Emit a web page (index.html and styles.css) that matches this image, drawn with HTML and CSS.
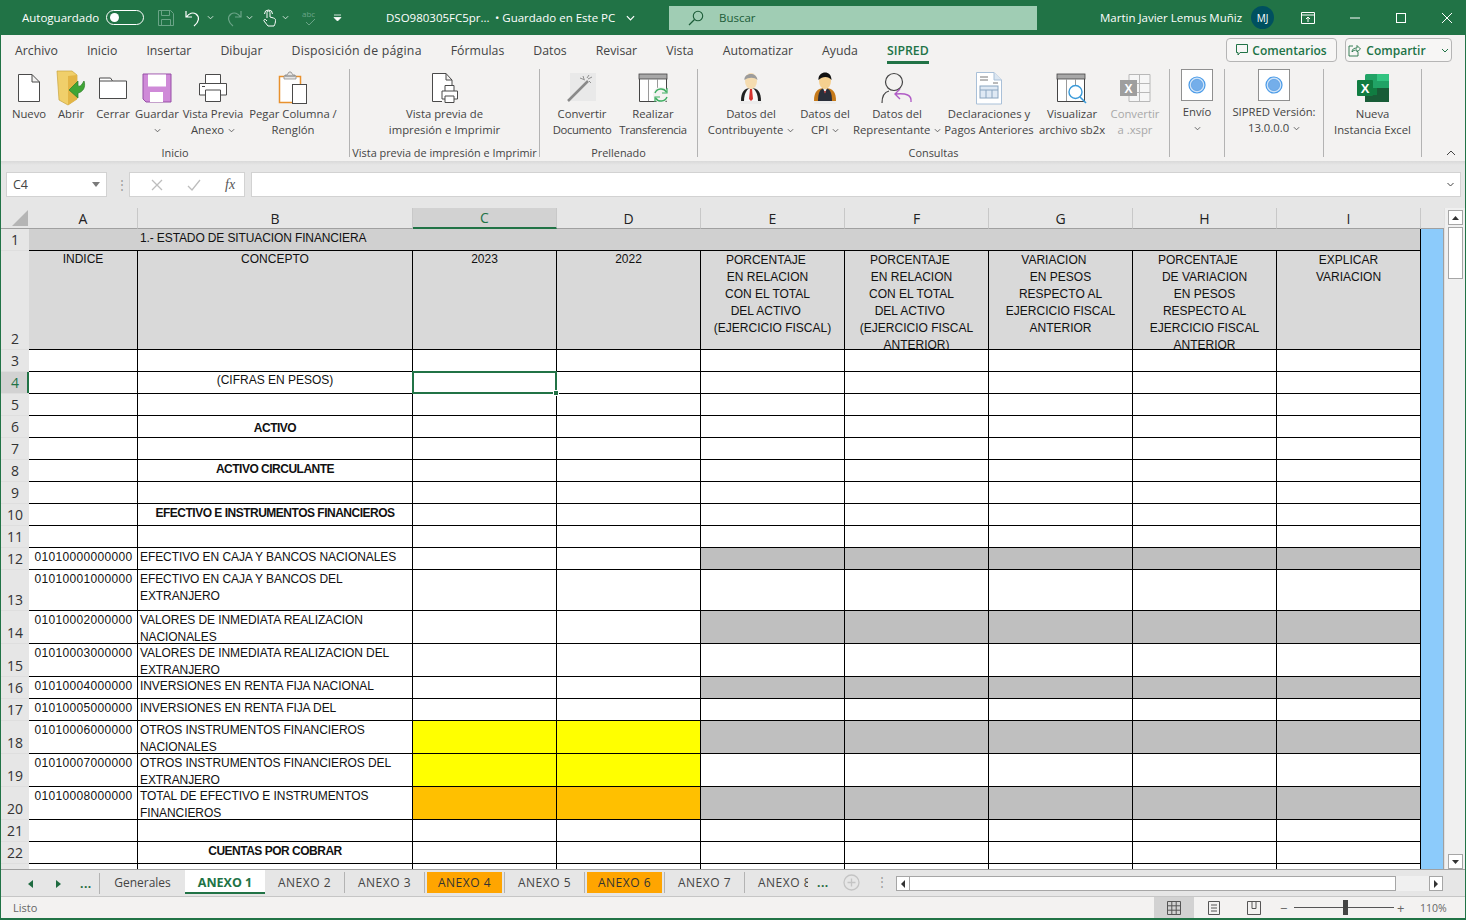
FILE: index.html
```html
<!DOCTYPE html>
<html lang="es">
<head>
<meta charset="utf-8">
<title>Excel</title>
<link rel="stylesheet" href="styles.css">
</head>
<body>
<svg class="defs" width="0" height="0">
  <symbol id="chev" viewBox="0 0 8 5"><path d="M1 1l3 3 3-3" fill="none" stroke="currentColor" stroke-width="1"/></symbol>
  <symbol id="dot" viewBox="0 0 34 34"><rect x=".5" y=".5" width="33" height="33" fill="#fff" stroke="#8a8a8a"/><circle cx="17" cy="17" r="8.500" fill="#cfe3f8" stroke="#4a9be8" stroke-width="1.300"/><circle cx="17" cy="17" r="6" fill="#74aeea" stroke="#5a9fe4" stroke-width=".8"/></symbol>
</svg>
<div class="window">

<header class="titlebar">
  <span class="autosave">Autoguardado</span>
  <span class="toggle"><i></i></span>
  <svg class="ml13 faded" width="18" height="18" viewBox="0 0 18 18"><path d="M1.500 1.500h12l3 3v12h-15zM4.500 1.500v5h8v-5M4.500 16.500v-6h9v6" fill="none" stroke="currentColor"/></svg>
  <svg class="ml10" width="17" height="18" viewBox="0 0 17 18"><path d="M1 2v6h6M1.500 8C4 4 8 3 11 5c4 3 3 8-2 12" fill="none" stroke="currentColor" stroke-width="1.200"/></svg>
  <svg class="ml5 small" width="7" height="5"><use href="#chev"/></svg>
  <svg class="ml11 faded" width="17" height="18" viewBox="0 0 17 18"><path d="M16 2v6h-6M15.500 8C13 4 9 3 6 5c-4 3-3 8 2 12" fill="none" stroke="currentColor" stroke-width="1.200"/></svg>
  <svg class="ml4 small faded" width="7" height="5"><use href="#chev"/></svg>
  <svg class="ml9" width="14" height="18" viewBox="0 0 14 18"><path d="M5 9V3.500a1.500 1.500 0 0 1 3 0V8l3.500 1c1.500.5 2 1 2 2.500 0 2-.5 3.500-1.500 5.500H6L2 12c-.5-1 .5-2 1.500-1.500L5 12M2.500 5a4 4 0 0 1 8 0" fill="none" stroke="currentColor" stroke-width="1"/></svg>
  <svg class="ml6 small" width="7" height="5"><use href="#chev"/></svg>
  <svg class="ml12 faded" width="18" height="18" viewBox="0 0 18 18"><text x="1" y="8" class="abc">abc</text><path d="M5 13l3 3 6-6" fill="none" stroke="currentColor"/></svg>
  <svg class="ml14" width="9" height="8" viewBox="0 0 9 8"><path d="M1 1h7M1 3.500l3.500 3.500L8 3.500z" fill="currentColor" stroke="currentColor" stroke-width=".8"/></svg>
  <span class="doc-name">DSO980305FC5pr...</span>
  <span class="doc-state">• Guardado en Este PC</span>
  <svg class="ml5" width="11" height="6" viewBox="0 0 8 5"><use href="#chev"/></svg>
  <div class="search">
    <svg width="16" height="16" viewBox="0 0 16 16"><circle cx="10" cy="6" r="4.700" fill="none" stroke="#1c5c38" stroke-width="1.100"/><path d="M6.500 9.500L1 15" stroke="#1c5c38" stroke-width="1.200"/></svg>
    <span>Buscar</span>
  </div>
  <span class="user">Martin Javier Lemus Muñiz</span>
  <span class="avatar">MJ</span>
  <svg class="ml27" width="14" height="12" viewBox="0 0 14 12"><path d="M.5 .5h13v11H.5zM.5 3h13M7 10V5M5 7l2-2 2 2" fill="none" stroke="currentColor"/></svg>
  <svg class="ml35" width="10" height="2" viewBox="0 0 10 2"><path d="M0 1h10" stroke="currentColor"/></svg>
  <svg class="ml36" width="10" height="10" viewBox="0 0 10 10"><rect x=".5" y=".5" width="9" height="9" fill="none" stroke="currentColor"/></svg>
  <svg class="ml36" width="10" height="10" viewBox="0 0 10 10"><path d="M0 0l10 10M10 0L0 10" stroke="currentColor"/></svg>
</header>

<nav class="tabsrow">
  <span>Archivo</span><span>Inicio</span><span>Insertar</span><span>Dibujar</span><span class="wide">Disposición de página</span><span>Fórmulas</span><span>Datos</span><span>Revisar</span><span>Vista</span><span>Automatizar</span><span>Ayuda</span><span class="active">SIPRED</span>
  <div class="share">
    <button class="sbtn comment"><svg width="12" height="12" viewBox="0 0 12 12"><path d="M.5 .5h11v8H4L2 11V8.500H.5z" fill="none" stroke="#217346"/></svg>Comentarios</button>
    <button class="sbtn compart"><svg width="13" height="13" viewBox="0 0 13 13"><path d="M5 2H1v10h9V8M4 8c0-3 2-4 5-4V1.500L12.500 5 9 8V6C7 6 5 6.500 4 8z" fill="none" stroke="#217346" stroke-width=".9"/></svg>Compartir<svg class="ml10" width="8" height="5"><use href="#chev"/></svg></button>
  </div>
</nav>

<section class="ribbon">
  <div class="group">
    <div class="items p7">
      <div class="item w42">
        <div class="ic"><svg width="24" height="30" viewBox="0 0 24 30"><path d="M1.500 1.500H15L22.500 9v19.500h-21zM15 1.500V9h7.500" fill="#fff" stroke="#4a4a4a"/></svg></div>
        <div class="lb">Nuevo</div>
      </div>
      <div class="item w42">
        <div class="ic"><svg width="30" height="36" viewBox="0 0 30 36"><path d="M1 1l15 0 5 4v24l-9 6-9-5z" fill="#f0cf6a" stroke="#c9a33c" stroke-width=".7"/><path d="M12 6l9-1v24l-9 6z" fill="#e3b545"/><path d="M28 11c2 6-1 11-6 12v5l-9-8 9-9v5c3 1 4-2 6-5z" fill="#3fa535" stroke="#2a7d25" stroke-width=".7"/></svg></div>
        <div class="lb">Abrir</div>
      </div>
      <div class="item w42">
        <div class="ic"><svg width="30" height="24" viewBox="0 0 30 24"><path d="M1.500 22.500V2h11l2 3h14v17.500zM1.500 5h13" fill="#fff" stroke="#4a4a4a"/></svg></div>
        <div class="lb">Cerrar</div>
      </div>
      <div class="item w46">
        <div class="ic"><svg width="30" height="30" viewBox="0 0 30 30"><path d="M1 1h28v28H4l-3-3z" fill="#cf8ad8" stroke="#964fa6"/><rect x="6" y="1.500" width="18" height="12" fill="#fff"/><rect x="8" y="19" width="13" height="10" fill="#fff"/></svg></div>
        <div class="lb">Guardar<br><svg class="chev" width="7" height="5"><use href="#chev"/></svg></div>
      </div>
      <div class="item w66">
        <div class="ic"><svg width="30" height="30" viewBox="0 0 30 30"><path d="M7.500 10V1.500h15V10M7.500 22h-6V10.500h27V22h-6M7.500 17h15v11.500h-15z" fill="#fff" stroke="#4a4a4a"/><path d="M4 13.500h3" stroke="#4a4a4a"/></svg></div>
        <div class="lb">Vista Previa<br>Anexo <svg class="chev" width="7" height="5"><use href="#chev"/></svg></div>
      </div>
      <div class="item w94">
        <div class="ic"><svg width="30" height="34" viewBox="0 0 30 34"><path d="M1.500 5.500h21v26h-21z" fill="#fff" stroke="#e8912d" stroke-width="1.500"/><path d="M7 5h10v-1h-2l-2-3h-2l-2 3H7zM6 5h12v3H6z" fill="#e4e4e4" stroke="#8a8a8a" stroke-width=".8"/><rect x="14.500" y="13.500" width="14" height="19" fill="#fff" stroke="#4a4a4a"/></svg></div>
        <div class="lb">Pegar Columna /<br>Renglón</div>
      </div>
    </div>
    <div class="glabel">Inicio</div>
  </div>

  <div class="group g-vista">
    <div class="items center">
      <div class="item w130">
        <div class="ic"><svg width="28" height="32" viewBox="0 0 28 32"><path d="M11 29.500H1.500v-28H15L21 8v7M15 1.500V8h6" fill="#fff" stroke="#4a4a4a"/><path d="M14 19v-5.500h9V19M14 27h-3v-8h15.500v8H23M14 24h9v6.500h-9z" fill="#fff" stroke="#4a4a4a"/></svg></div>
        <div class="lb">Vista previa de<br>impresión e Imprimir</div>
      </div>
    </div>
    <div class="glabel">Vista previa de impresión e Imprimir</div>
  </div>

  <div class="group g-prell">
    <div class="items p8">
      <div class="item w68">
        <div class="ic"><svg width="32" height="32" viewBox="0 0 32 32"><rect x="4" y="1" width="26" height="28" fill="#e9e9e9"/><path d="M2 29L22 9" stroke="#8a8a8a" stroke-width="2.500"/><path d="M17 4l1 3M23 3l-2 3M26 5l-4 2M14 6l5 2M25 11l-2-2" stroke="#777" stroke-width=".8"/></svg></div>
        <div class="lb">Convertir<br><span class="cond">Documento</span></div>
      </div>
      <div class="item w70 ml2">
        <div class="ic"><svg width="34" height="32" viewBox="0 0 34 32"><path d="M3.500 2.500h27v27h-27z" fill="#fff" stroke="#444"/><rect x="3" y="2" width="28" height="5" fill="#a8a8a8" stroke="#444" stroke-width=".8"/><path d="M12.500 7v22M21.500 7v22" stroke="#9a9a9a"/><circle cx="25" cy="23" r="8" fill="#f3f2f1"/><path d="M19 21a6.500 6.500 0 0 1 11.500-1M31 25a6.500 6.500 0 0 1-11.500 1" fill="none" stroke="#3fae62" stroke-width="1.500"/><path d="M31 16v5h-5M19 30v-5h5" fill="none" stroke="#3fae62" stroke-width="1.200"/></svg></div>
        <div class="lb">Realizar<br><span class="cond">Transferencia</span></div>
      </div>
    </div>
    <div class="glabel">Prellenado</div>
  </div>

  <div class="group g-cons">
    <div class="items p7">
      <div class="item w92">
        <div class="ic"><svg width="26" height="34" viewBox="0 0 26 34"><path d="M3 30c0-9 3-13 10-13s10 4 10 13z" fill="#222"/><path d="M6 30c0-7 3-13 7-13s7 6 7 13z" fill="#f7f7f7"/><path d="M12 18h2l1 10-2 2-2-2z" fill="#d5322e"/><ellipse cx="13" cy="10" rx="6" ry="8" fill="#f5dcb0"/><path d="M6.500 9c-1-7 12-9 13 0-3-3-9-3-13 0z" fill="#9c9c9c"/><rect x="2" y="30" width="22" height="3" rx="1.500" fill="#ececec"/></svg></div>
        <div class="lb">Datos del<br>Contribuyente <svg class="chev" width="7" height="5"><use href="#chev"/></svg></div>
      </div>
      <div class="item w56">
        <div class="ic"><svg width="26" height="34" viewBox="0 0 26 34"><path d="M2 30c0-9 3-13 11-13s11 4 11 13z" fill="#c67a1a"/><path d="M6 30c0-8 2-13 7-13s7 5 7 13z" fill="#2a2f3a"/><path d="M11 17h4l-2 5z" fill="#f0f0f0"/><path d="M12 20h2l-1 3z" fill="#c03030"/><ellipse cx="13" cy="10" rx="6" ry="8" fill="#f5d08f"/><path d="M6.500 9c-1-9 13-11 13 0-3-4-9-4-13 0z" fill="#111"/><rect x="2" y="30" width="22" height="3" rx="1.500" fill="#ececec"/></svg></div>
        <div class="lb">Datos del<br>CPI <svg class="chev" width="7" height="5"><use href="#chev"/></svg></div>
      </div>
      <div class="item w88">
        <div class="ic"><svg width="32" height="34" viewBox="0 0 32 34"><circle cx="13" cy="11" r="8.500" fill="none" stroke="#444" stroke-width="1.200"/><path d="M1 32c0-7 3-11 7-12" fill="none" stroke="#444" stroke-width="1.200"/><path d="M30 31c1-7-5-9-15-8M19 18l-5 5 5 5" fill="none" stroke="#b05cc6" stroke-width="1.400"/></svg></div>
        <div class="lb">Datos del<br>Representante <svg class="chev" width="7" height="5"><use href="#chev"/></svg></div>
      </div>
      <div class="item w92 ml2">
        <div class="ic"><svg width="28" height="34" viewBox="0 0 28 34"><path d="M1.500 1.500H19L26.500 9v24h-25z" fill="#fff" stroke="#a9c0d8"/><path d="M19 1.500V9h7.500" fill="#dbe6f1" stroke="#a9c0d8"/><path d="M5 6h8M5 9h8M18 12h5" stroke="#777"/><rect x="5" y="15" width="18" height="12" fill="#dfe9f4" stroke="#8aa5c0"/><path d="M5 19h18M11 19v8M17 19v8" stroke="#8aa5c0"/></svg></div>
        <div class="lb">Declaraciones y<br>Pagos Anteriores</div>
      </div>
      <div class="item w70 ml2">
        <div class="ic"><svg width="32" height="32" viewBox="0 0 32 32"><path d="M1.500 2.500h27v27h-27z" fill="#fff" stroke="#444"/><rect x="1" y="2" width="28" height="5" fill="#a8a8a8" stroke="#444" stroke-width=".8"/><path d="M10.500 7v22M19.500 7v12" stroke="#9a9a9a"/><circle cx="19.500" cy="20" r="6.500" fill="#fff" stroke="#3a9ad9" stroke-width="1.400"/><path d="M24 25l6 6" stroke="#3a9ad9" stroke-width="1.600"/></svg></div>
        <div class="lb">Visualizar<br>archivo sb2x</div>
      </div>
      <div class="item w56 off">
        <div class="ic"><svg width="32" height="30" viewBox="0 0 32 30"><path d="M10 1.500h21v27H10zM10 10.500h21M10 19.500h21M20.500 1.500v27" fill="#f6f6f6" stroke="#b8b8b8"/><rect x="1" y="7" width="17" height="16" fill="#9e9e9e"/><text x="9.500" y="20" class="xmark">X</text></svg></div>
        <div class="lb">Convertir<br>a .xspr</div>
      </div>
    </div>
    <div class="glabel">Consultas</div>
  </div>

  <div class="group g-envio">
    <div class="items center">
      <div class="item w54 high">
        <div class="ic"><svg width="32" height="32"><use href="#dot"/></svg></div>
        <div class="lb">Envío<br><svg class="chev" width="7" height="5"><use href="#chev"/></svg></div>
      </div>
    </div>
  </div>
  <div class="group g-sipred">
    <div class="items center">
      <div class="item w98 high">
        <div class="ic"><svg width="32" height="32"><use href="#dot"/></svg></div>
        <div class="lb">SIPRED Versión:<br>13.0.0.0 <svg class="chev" width="7" height="5"><use href="#chev"/></svg></div>
      </div>
    </div>
  </div>
  <div class="group g-nueva">
    <div class="items center">
      <div class="item w98">
        <div class="ic"><svg width="34" height="30" viewBox="0 0 34 30"><rect x="9" y="1" width="24" height="28" rx="1.500" fill="#21a366"/><rect x="21" y="1" width="12" height="7" fill="#33c481"/><rect x="9" y="15" width="24" height="14" fill="#107c41"/><rect x="21" y="15" width="12" height="7" fill="#185c37"/><rect x="9" y="22" width="24" height="7" fill="#185c37"/><rect x="1" y="7" width="16" height="16" rx="1" fill="#107c41"/><text x="9" y="20" class="xlogo">X</text></svg></div>
        <div class="lb">Nueva<br>Instancia Excel</div>
      </div>
    </div>
  </div>
  <svg class="collapse" width="10" height="6" viewBox="0 0 10 6"><path d="M1 5l4-4 4 4" fill="none" stroke="#444"/></svg>
</section>

<section class="formulabar">
  <div class="namebox"><span>C4</span><svg width="8" height="5" viewBox="0 0 8 5"><path d="M0 0h8L4 5z" fill="#7a7a7a"/></svg></div>
  <div class="fdots">⋮</div>
  <div class="fxbox">
    <svg width="12" height="12" viewBox="0 0 12 12"><path d="M1 1l10 10M11 1L1 11" stroke="#bdbdbd" stroke-width="1.300"/></svg>
    <svg width="14" height="12" viewBox="0 0 14 12"><path d="M1 7l4 4 8-10" fill="none" stroke="#bdbdbd" stroke-width="1.300"/></svg>
    <i>fx</i>
  </div>
  <div class="finput"><svg width="9" height="5" viewBox="0 0 8 5"><use href="#chev"/></svg></div>
</section>

<main class="sheet">
  <div class="gridwrap">
  <table class="grid">
    <colgroup><col class="c-h"><col class="c-a"><col class="c-b"><col class="c-d"><col class="c-d"><col class="c-d"><col class="c-d"><col class="c-d"><col class="c-d"><col class="c-d"><col class="c-j"></colgroup>
    <thead>
      <tr class="hdr">
        <th class="corner"><svg width="16" height="16" viewBox="0 0 16 16"><path d="M16 0v16H0z" fill="#b5b5b5"/></svg></th>
        <th>A</th><th>B</th><th class="cur">C</th><th>D</th><th>E</th><th>F</th><th>G</th><th>H</th><th>I</th><th class="nohdr"></th>
      </tr>
    </thead>
    <tbody>
      <tr class="h22"><th>1</th><td colspan="9" class="title"><div class="c">1.- ESTADO DE SITUACION FINANCIERA</div></td><td rowspan="23" class="blue"></td></tr>
      <tr class="h99 head">
        <th>2</th>
        <td><div class="c mid tight">INDICE</div></td>
        <td><div class="c mid tight">CONCEPTO</div></td>
        <td><div class="c mid tight">2023</div></td>
        <td><div class="c mid tight">2022</div></td>
        <td><div class="c mid">PORCENTAJE&nbsp;&nbsp;&nbsp;&nbsp;<br>EN RELACION&nbsp;&nbsp;&nbsp;<br>CON EL TOTAL&nbsp;&nbsp;&nbsp;<br>DEL ACTIVO&nbsp;&nbsp;&nbsp;&nbsp;<br>(EJERCICIO FISCAL)</div></td>
        <td><div class="c mid">PORCENTAJE&nbsp;&nbsp;&nbsp;&nbsp;<br>EN RELACION&nbsp;&nbsp;&nbsp;<br>CON EL TOTAL&nbsp;&nbsp;&nbsp;<br>DEL ACTIVO&nbsp;&nbsp;&nbsp;&nbsp;<br>(EJERCICIO FISCAL<br>ANTERIOR)</div></td>
        <td><div class="c mid">VARIACION&nbsp;&nbsp;&nbsp;&nbsp;<br>EN PESOS<br>RESPECTO AL<br>EJERCICIO FISCAL<br>ANTERIOR</div></td>
        <td><div class="c mid">PORCENTAJE&nbsp;&nbsp;&nbsp;&nbsp;<br>DE VARIACION<br>EN PESOS<br>RESPECTO AL<br>EJERCICIO FISCAL<br>ANTERIOR</div></td>
        <td><div class="c mid">EXPLICAR<br>VARIACION</div></td>
      </tr>
      <tr class="h22"><th>3</th><td></td><td></td><td></td><td></td><td></td><td></td><td></td><td></td><td></td></tr>
      <tr class="h22 r4"><th>4</th><td></td><td><div class="c mid nopad">(CIFRAS EN PESOS)</div></td><td class="sel"><div class="cursor"><i></i></div></td><td></td><td></td><td></td><td></td><td></td><td></td></tr>
      <tr class="h22"><th>5</th><td></td><td></td><td></td><td></td><td></td><td></td><td></td><td></td><td></td></tr>
      <tr class="h22"><th>6</th><td></td><td><div class="c mid b low">ACTIVO</div></td><td></td><td></td><td></td><td></td><td></td><td></td><td></td></tr>
      <tr class="h22"><th>7</th><td></td><td></td><td></td><td></td><td></td><td></td><td></td><td></td><td></td></tr>
      <tr class="h22"><th>8</th><td></td><td><div class="c mid b">ACTIVO CIRCULANTE</div></td><td></td><td></td><td></td><td></td><td></td><td></td><td></td></tr>
      <tr class="h22"><th>9</th><td></td><td></td><td></td><td></td><td></td><td></td><td></td><td></td><td></td></tr>
      <tr class="h22"><th>10</th><td></td><td><div class="c mid b">EFECTIVO E INSTRUMENTOS FINANCIEROS</div></td><td></td><td></td><td></td><td></td><td></td><td></td><td></td></tr>
      <tr class="h22"><th>11</th><td></td><td></td><td></td><td></td><td></td><td></td><td></td><td></td><td></td></tr>
      <tr class="h22"><th>12</th><td><div class="c idx">01010000000000</div></td><td><div class="c tx">EFECTIVO EN CAJA Y BANCOS NACIONALES</div></td><td></td><td></td><td class="g"></td><td class="g"></td><td class="g"></td><td class="g"></td><td class="g"></td></tr>
      <tr class="h41"><th>13</th><td><div class="c idx">01010001000000</div></td><td><div class="c tx">EFECTIVO EN CAJA Y BANCOS DEL EXTRANJERO</div></td><td></td><td></td><td></td><td></td><td></td><td></td><td></td></tr>
      <tr class="h33"><th>14</th><td><div class="c idx">01010002000000</div></td><td><div class="c tx">VALORES DE INMEDIATA REALIZACION NACIONALES</div></td><td></td><td></td><td class="g"></td><td class="g"></td><td class="g"></td><td class="g"></td><td class="g"></td></tr>
      <tr class="h33"><th>15</th><td><div class="c idx">01010003000000</div></td><td><div class="c tx">VALORES DE INMEDIATA REALIZACION DEL EXTRANJERO</div></td><td></td><td></td><td></td><td></td><td></td><td></td><td></td></tr>
      <tr class="h22"><th>16</th><td><div class="c idx">01010004000000</div></td><td><div class="c tx">INVERSIONES EN RENTA FIJA NACIONAL</div></td><td></td><td></td><td class="g"></td><td class="g"></td><td class="g"></td><td class="g"></td><td class="g"></td></tr>
      <tr class="h22"><th>17</th><td><div class="c idx">01010005000000</div></td><td><div class="c tx">INVERSIONES EN RENTA FIJA DEL</div></td><td></td><td></td><td></td><td></td><td></td><td></td><td></td></tr>
      <tr class="h33"><th>18</th><td><div class="c idx">01010006000000</div></td><td><div class="c tx">OTROS INSTRUMENTOS FINANCIEROS NACIONALES</div></td><td class="y"></td><td class="y"></td><td class="g"></td><td class="g"></td><td class="g"></td><td class="g"></td><td class="g"></td></tr>
      <tr class="h33"><th>19</th><td><div class="c idx">01010007000000</div></td><td><div class="c tx">OTROS INSTRUMENTOS FINANCIEROS DEL EXTRANJERO</div></td><td class="y"></td><td class="y"></td><td></td><td></td><td></td><td></td><td></td></tr>
      <tr class="h33"><th>20</th><td><div class="c idx">01010008000000</div></td><td><div class="c tx">TOTAL DE EFECTIVO E INSTRUMENTOS FINANCIEROS</div></td><td class="o"></td><td class="o"></td><td class="g"></td><td class="g"></td><td class="g"></td><td class="g"></td><td class="g"></td></tr>
      <tr class="h22"><th>21</th><td></td><td></td><td></td><td></td><td></td><td></td><td></td><td></td><td></td></tr>
      <tr class="h22"><th>22</th><td></td><td><div class="c mid b">CUENTAS POR COBRAR</div></td><td></td><td></td><td></td><td></td><td></td><td></td><td></td></tr>
      <tr class="h22"><th>23</th><td></td><td></td><td></td><td></td><td></td><td></td><td></td><td></td><td></td></tr>
    </tbody>
  </table>
  </div>
  <aside class="vscroll">
    <div class="vbtn"><svg width="7" height="4" viewBox="0 0 7 4"><path d="M0 4l3.500-4L7 4z" fill="#333"/></svg></div>
    <div class="vthumb"></div>
    <div class="vbtn bottom"><svg width="7" height="4" viewBox="0 0 7 4"><path d="M0 0l3.500 4L7 0z" fill="#333"/></svg></div>
  </aside>
</main>

<section class="sheetbar">
  <div class="nav">
    <svg width="5" height="8" viewBox="0 0 5 8"><path d="M5 0v8L0 4z" fill="#1e6b40"/></svg>
    <svg class="nav2" width="5" height="8" viewBox="0 0 5 8"><path d="M0 0v8l5-4z" fill="#1e6b40"/></svg>
    <b>...</b>
  </div>
  <div class="tab first"><span>Generales</span></div>
  <div class="tab cur"><span>ANEXO 1</span></div>
  <div class="tab"><span>ANEXO 2</span></div>
  <div class="tab"><span>ANEXO 3</span></div>
  <div class="tab orange"><span>ANEXO 4</span></div>
  <div class="tab"><span>ANEXO 5</span></div>
  <div class="tab orange"><span>ANEXO 6</span></div>
  <div class="tab"><span>ANEXO 7</span></div>
  <div class="tab last"><span>ANEXO 8</span></div>
  <b class="more">...</b>
  <svg class="plus" width="17" height="17" viewBox="0 0 17 17"><circle cx="8.500" cy="8.500" r="7.500" fill="none" stroke="#c4c4c4" stroke-width="1.300"/><path d="M8.500 4.500v8M4.500 8.500h8" stroke="#c4c4c4" stroke-width="1.300"/></svg>
  <span class="vdots">⋮</span>
  <div class="hscroll">
    <div class="harrow"><svg width="4" height="8" viewBox="0 0 4 8"><path d="M4 0v8L0 4z" fill="#333"/></svg></div>
    <div class="hthumb"></div>
    <div class="harrow end"><svg width="4" height="8" viewBox="0 0 4 8"><path d="M0 0v8l4-4z" fill="#333"/></svg></div>
  </div>
</section>

<footer class="status">
  <span class="ready">Listo</span>
  <div class="view on"><svg width="14" height="14" viewBox="0 0 14 14"><path d="M.5 .5h13v13H.5zM.5 4.800h13M.5 9.200h13M4.800 .5v13M9.200 .5v13" fill="none" stroke="#555"/></svg></div>
  <div class="view"><svg width="14" height="14" viewBox="0 0 14 14"><path d="M1.500 .5h11v13h-11zM4 4h6M4 7h6M4 10h6" fill="none" stroke="#555"/></svg></div>
  <div class="view"><svg width="14" height="14" viewBox="0 0 14 14"><path d="M.5 .5h13v13H.5zM5 .5v7h4v-7" fill="none" stroke="#555"/></svg></div>
  <span class="zminus">−</span>
  <div class="slider"><i></i></div>
  <span class="zplus">+</span>
  <span class="zoom">110%</span>
</footer>

</div>
</body>
</html>
```
FILE: styles.css
```css
* { box-sizing: border-box; }
html, body { margin: 0; padding: 0; height: 920px; overflow: hidden; }
body { font-family: "Open Sans", "Liberation Sans", sans-serif; font-size: 11.5px; color: #444; background: #f3f2f1; }
.defs { position: absolute; }
.window { width: 1466px; height: 920px; border-left: 1px solid #217346; border-right: 1px solid #217346; border-bottom: 2px solid #217346; display: flex; flex-direction: column; overflow: hidden; }

/* title bar */
.titlebar { flex: none; height: 35px; background: #217346; color: #fff; display: flex; align-items: center; padding-left: 21px; }
.titlebar svg { flex: none; }
.autosave { width: 84px; }
.toggle { width: 38px; height: 15px; border: 1px solid #fff; border-radius: 8px; display: flex; align-items: center; padding-left: 3px; }
.toggle i { width: 9px; height: 9px; background: #fff; border-radius: 50%; }
.faded { color: #6aa487; }
.small { color: #e4efe9; }
.ml2 { margin-left: 2px; } .ml4 { margin-left: 4px; } .ml5 { margin-left: 5px; } .ml6 { margin-left: 6px; } .ml9 { margin-left: 9px; } .ml10 { margin-left: 10px; } .ml11 { margin-left: 11px; } .ml12 { margin-left: 12px; } .ml13 { margin-left: 13px; } .ml14 { margin-left: 14px; } .ml27 { margin-left: 27px; } .ml35 { margin-left: 35px; } .ml36 { margin-left: 36px; }
.abc { font-size: 8px; fill: #6aa487; font-family: "Open Sans", sans-serif; }
.doc-name { margin-left: 44px; width: 109px; white-space: nowrap; }
.doc-state { white-space: nowrap; width: 125px; }
.search { margin-left: 33px; width: 368px; height: 24px; background: #a0cdb4; color: #1c5c38; display: flex; align-items: center; padding-left: 19px; flex: none; }
.search span { margin-left: 15px; }
.user { margin-left: 63px; width: 151px; white-space: nowrap; }
.avatar { width: 23px; height: 23px; border-radius: 50%; background: #00505f; font-size: 10px; display: flex; align-items: center; justify-content: center; }

/* ribbon tabs */
.tabsrow { flex: none; height: 30px; display: flex; align-items: center; gap: 29px; padding-left: 14px; background: #f3f2f1; font-size: 12.3px; position: relative; }
.tabsrow > span { white-space: nowrap; }
.tabsrow .wide { letter-spacing: .25px; }
.tabsrow .active { font-weight: 600; color: #217346; box-shadow: inset 0 -3px 0 #217346; height: 28px; display: flex; align-items: center; }
.share { margin-left: auto; display: flex; gap: 8px; margin-right: 13px; }
.sbtn { font: 600 12px "Open Sans", sans-serif; color: #217346; height: 24px; background: #f7f6f5; border: 1px solid #b5b5b5; border-radius: 4px; display: flex; align-items: center; justify-content: center; gap: 4px; padding: 0; }
.comment { width: 111px; }
.compart { width: 107px; gap: 5px; }

/* ribbon */
.ribbon { flex: none; height: 96px; padding-top: 4px; display: flex; background: #f3f2f1; }
.group { width: 349px; height: 88px; border-right: 1px solid #b3b3b3; display: flex; flex-direction: column; flex: none; }
.items { flex: 1; display: flex; }
.items.center { justify-content: center; }
.p7 { padding-left: 7px; }
.p8 { padding-left: 8px; }
.glabel { height: 16px; margin-bottom: -4px; line-height: 16px; text-align: center; font-size: 10.9px; white-space: nowrap; }
.g-vista { width: 190px; }
.g-prell { width: 158px; }
.g-cons { width: 472px; }
.g-envio { width: 55px; }
.g-sipred { width: 99px; }
.g-nueva { width: 98px; }
.item { flex: none; text-align: center; }
.w42 { width: 42px; } .w46 { width: 46px; } .w54 { width: 54px; } .w56 { width: 56px; } .w66 { width: 66px; } .w68 { width: 68px; } .w70 { width: 70px; } .w88 { width: 88px; } .w92 { width: 92px; } .w94 { width: 94px; } .w98 { width: 98px; } .w130 { width: 130px; }
.ic { height: 37px; display: flex; align-items: center; justify-content: center; }
.lb { line-height: 16px; white-space: nowrap; font-size: 11.3px; }
.lb .chev { margin-left: 1px; vertical-align: 1px; color: #555; }
.cond { letter-spacing: -.35px; }
.off { color: #a8a8a8; }
.high .ic { height: 33px; align-items: flex-start; }
.high .lb { margin-top: 2px; }
.xmark { font: bold 12px "Liberation Sans", sans-serif; fill: #fff; text-anchor: middle; }
.xlogo { font: bold 13px "Liberation Sans", sans-serif; fill: #fff; text-anchor: middle; }
.collapse { align-self: flex-end; margin: 0 0 5px 24px; }

/* formula bar */
.formulabar { flex: none; height: 47px; background: linear-gradient(#d9d9d9, #e6e6e6 4px); display: flex; align-items: flex-start; padding: 11px 0 0 5px; }
.namebox { width: 101px; height: 25px; background: #fff; border: 1px solid #d2d2d2; display: flex; align-items: center; justify-content: space-between; padding: 0 6px 0 6px; font-size: 12.500px; }
.fdots { width: 22px; padding-left: 8px; text-align: center; line-height: 25px; color: #9a9a9a; }
.fxbox { width: 116px; height: 25px; background: #fff; border: 1px solid #d2d2d2; display: flex; align-items: center; padding-left: 21px; gap: 24px; }
.fxbox i { font: italic 14px "Liberation Serif", serif; color: #555; }
.finput { width: 1210px; height: 25px; margin-left: 6px; background: #fff; border: 1px solid #d2d2d2; display: flex; align-items: center; justify-content: flex-end; padding-right: 5px; color: #444; }

/* sheet */
.sheet { flex: none; height: 661px; display: flex; background: #e6e6e6; }
.gridwrap { width: 1443px; height: 661px; overflow: hidden; flex: none; }
.grid { border-collapse: separate; border-spacing: 0; table-layout: fixed; width: 1443px; font: 12px/17px "Liberation Sans", Arial, sans-serif; color: #111; background: #fff; }
.c-h { width: 28px; } .c-a { width: 109px; } .c-b { width: 275px; } .c-d { width: 144px; } .c-j { width: 23px; }
.grid td { padding: 0; border-right: 1px solid #000; border-bottom: 1px solid #000; vertical-align: top; }
.grid tbody th { padding: 0; background: #e6e6e6; font: 400 14px/21px "Open Sans", sans-serif; color: #333; vertical-align: bottom; text-align: center; border-bottom: 1px solid #dedede; }
.hdr { height: 20px; }
.hdr th { padding: 0; background: #e6e6e6; font: 400 14px/19px "Open Sans", sans-serif; color: #222; border-right: 1px solid #c8c8c8; border-bottom: 1px solid #a0a0a0; text-align: center; vertical-align: middle; }
.hdr .corner { text-align: right; padding-right: 1px; line-height: 0; border-right: 0; }
.hdr .cur { background: #d2d2d2; color: #217346; border-bottom: 2px solid #217346; }
.hdr .nohdr { border-right: 0; }
.h22 { height: 22px; } .h33 { height: 33px; } .h41 { height: 41px; } .h99 { height: 99px; }
.c { overflow: hidden; height: 21px; padding-top: 1px; }
.h33 .c { height: 32px; } .h41 .c { height: 40px; } .h99 .c { height: 98px; }
.mid { text-align: center; }
.tight { line-height: 15px; }
.b { font-weight: bold; letter-spacing: -.5px; }
.low { padding-top: 4px; }
.nopad { padding-top: 0; }
.tx { padding-left: 2px; letter-spacing: -.08px; }
.idx { text-align: center; letter-spacing: .33px; padding-left: 1px; }
.grid .title { background: #d0d0d0; padding-left: 111px; letter-spacing: -.12px; }
.title .c { padding-top: 1px; }
.head td { background: #d9d9d9; }
.grid .g { background: #bfbfbf; }
.grid .y { background: #ff0; }
.grid .o { background: #ffc000; }
.grid .blue { background: #8ccbfb; border-right: 1px solid #a0a0a0; border-bottom: 0; }
.grid .r4 th { background: #d2d2d2; color: #217346; box-shadow: inset -2px 0 0 #217346; }
.sel { position: relative; }
.cursor { position: absolute; left: -1px; top: -1px; right: -1px; bottom: -1px; border: 2px solid #217346; }
.cursor i { position: absolute; right: -4px; bottom: -4px; width: 6px; height: 6px; background: #217346; border: 1px solid #fff; }

/* vertical scrollbar */
.vscroll { flex: none; width: 21px; background: #f0f0f0; display: flex; flex-direction: column; align-items: center; padding-top: 2px; border-left: 1px solid #e0e0e0; }
.vbtn { width: 15px; height: 15px; background: #fff; border: 1px solid #a6a6a6; display: flex; align-items: center; justify-content: center; flex: none; }
.vbtn.bottom { margin-top: auto; }
.vthumb { width: 15px; height: 52px; margin-top: 2px; background: #fff; border: 1px solid #a6a6a6; }

/* sheet tabs */
.sheetbar { flex: none; height: 28px; background: #e6e6e6; border-top: 1px solid #a0a0a0; border-bottom: 1px solid #c6c6c6; display: flex; align-items: flex-start; font-size: 12px; }
.nav { width: 99px; height: 21px; margin-top: 3px; border-right: 1px solid #b3b3b3; display: flex; align-items: center; padding-left: 27px; color: #1e6b40; flex: none; }
.nav2 { margin-left: 23px; }
.nav b { margin-left: 19px; font-size: 12px; letter-spacing: .5px; }
.tab { flex: none; width: 80px; height: 21px; margin-top: 2px; border-right: 1px solid #b3b3b3; padding: 0 2px; white-space: nowrap; overflow: hidden; letter-spacing: .5px; }
.tab span { display: block; height: 21px; line-height: 21px; text-align: center; }
.tab.first { width: 85px; border-right: 0; letter-spacing: 0; }
.tab.cur { margin-top: 0; height: 24px; background: #fff; padding: 0; border-right: 0; border-bottom: 2px solid #217346; color: #217346; font-weight: 700; font-size: 12.5px; letter-spacing: 0; }
.tab.cur span { height: 22px; line-height: 25px; }
.tab.orange span { background: #ffa500; color: #333; }
.tab.last { width: 63px; border-right: 0; padding: 0 0 0 13px; }
.tab.last span { text-align: left; }
.more { color: #1e6b40; margin: 4px 0 0 9px; letter-spacing: .5px; width: 14px; }
.plus { margin: 4px 0 0 12px; flex: none; }
.vdots { margin: 3px 0 0 16px; color: #9a9a9a; width: 14px; }
.hscroll { width: 547px; height: 15px; margin: 6px 0 0 6px; display: flex; flex: none; background: #f0f0f0; }
.harrow { width: 14px; height: 15px; background: #fff; border: 1px solid #a6a6a6; display: flex; align-items: center; justify-content: center; flex: none; }
.harrow.end { margin-left: auto; }
.hthumb { width: 486px; background: #fff; border: 1px solid #a6a6a6; border-left: 0; }

/* status */
.status { flex: 1; display: flex; align-items: center; background: #f3f2f1; font-size: 11px; color: #666; }
.ready { margin-left: 12px; width: 1141px; }
.view { width: 40px; height: 21px; display: flex; align-items: center; justify-content: center; flex: none; }
.view.on { background: #d2d2d2; }
.zminus { margin-left: 6px; font-size: 13px; width: 14px; }
.slider { width: 100px; height: 1px; background: #555; position: relative; }
.slider i { position: absolute; left: 49px; top: -7px; width: 5px; height: 15px; background: #444; }
.zplus { margin-left: 3px; font-size: 13px; width: 12px; }
.zoom { margin-left: 11px; font-size: 10.500px; white-space: nowrap; }
```
